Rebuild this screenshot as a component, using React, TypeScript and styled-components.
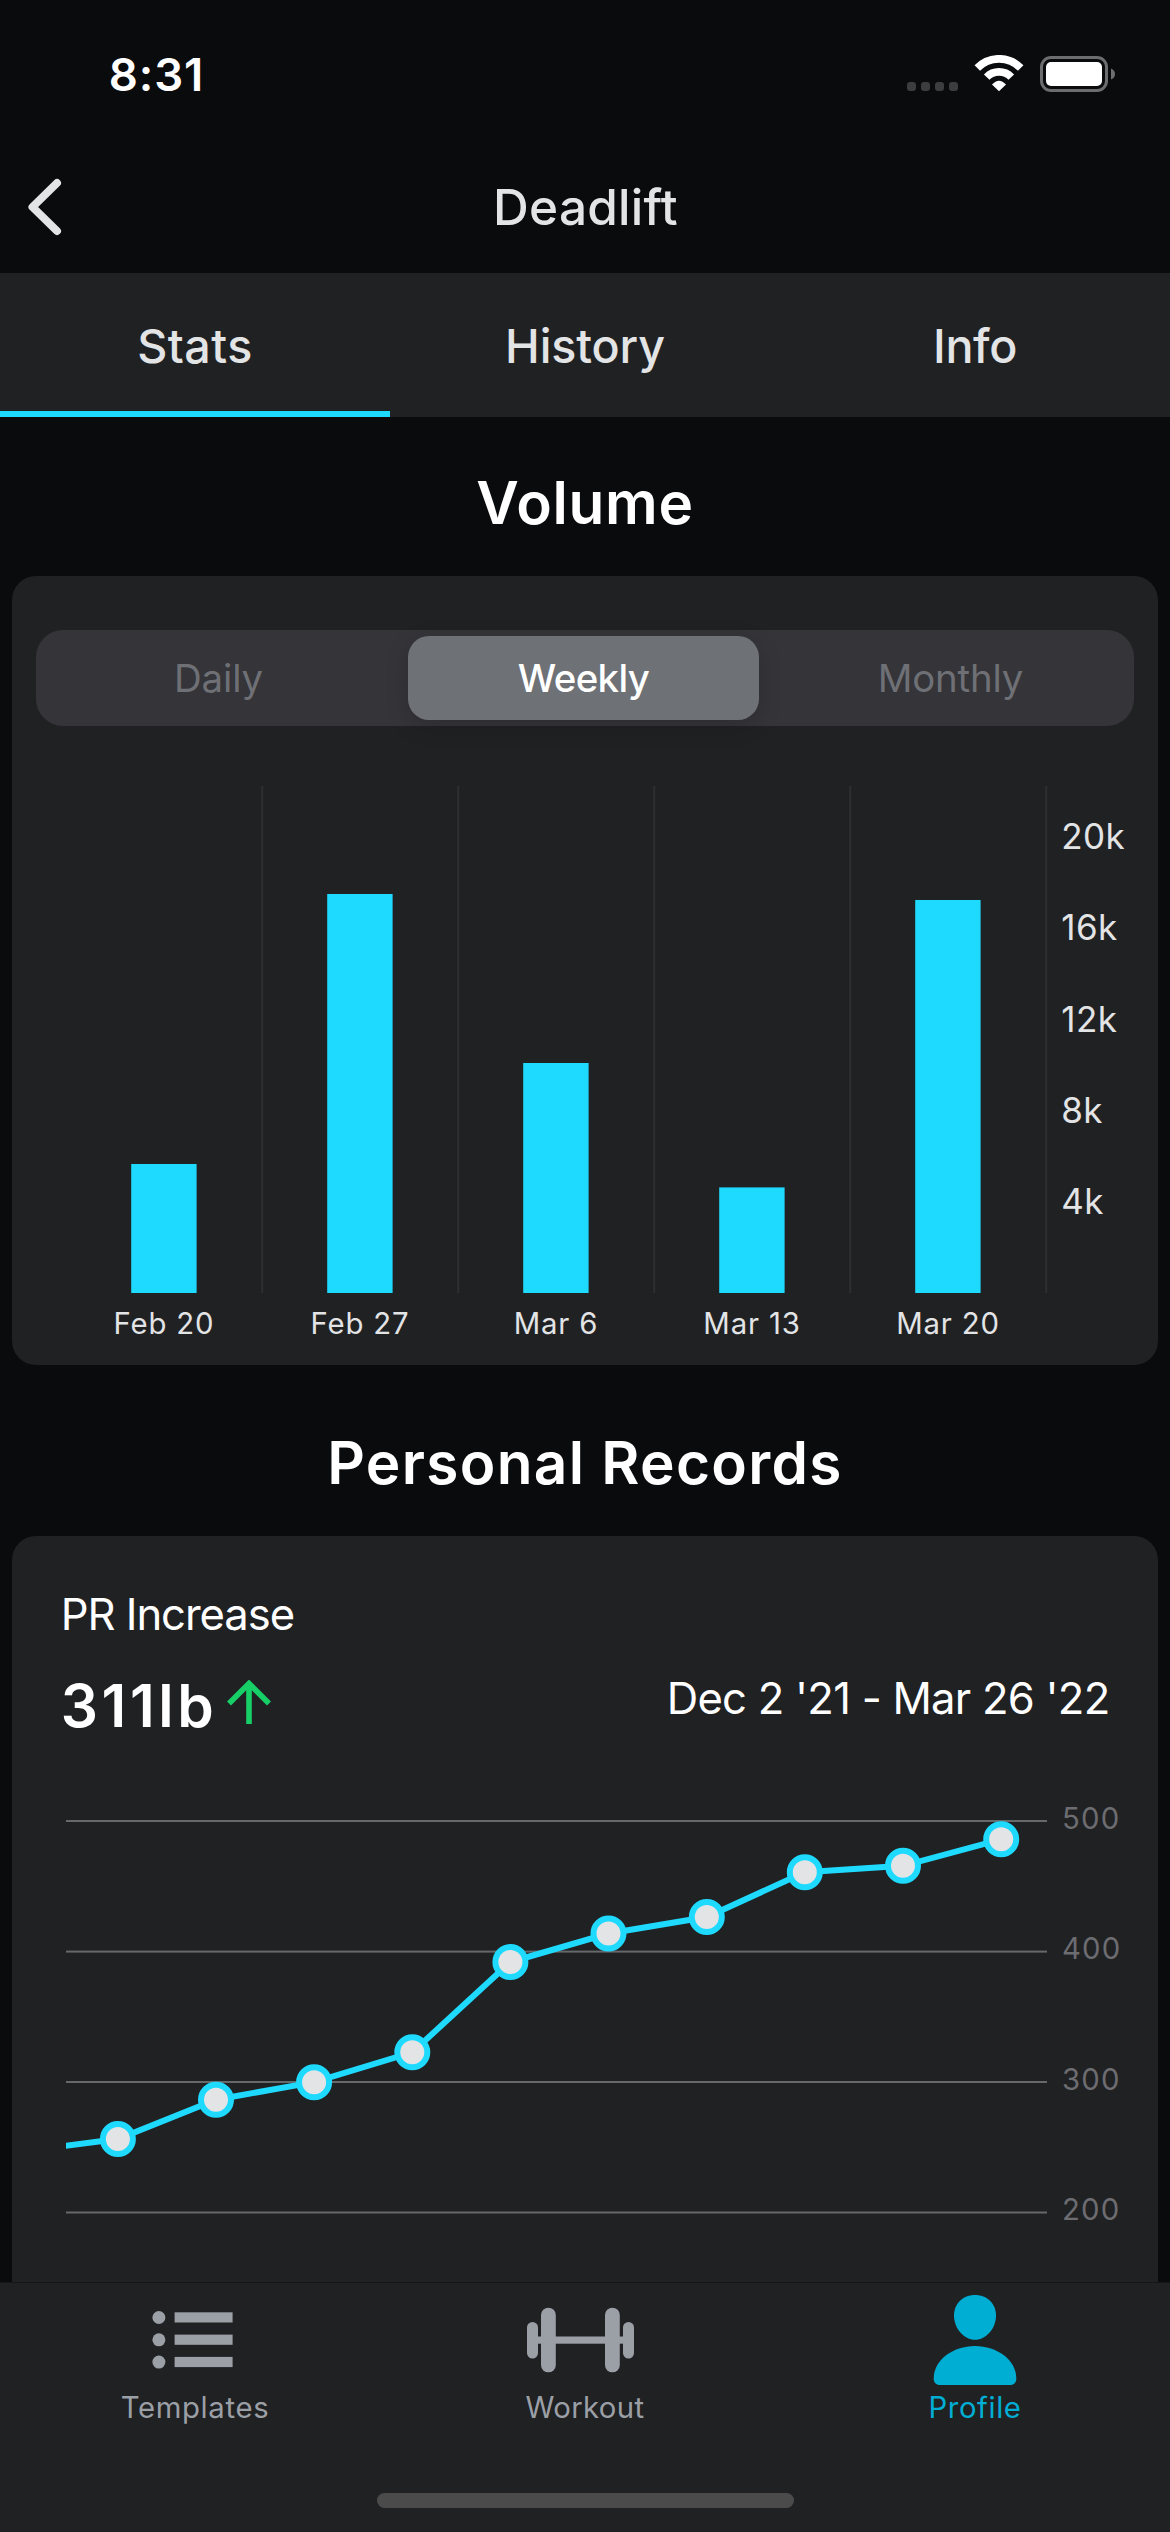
import React from "react";
import styled, { createGlobalStyle } from "styled-components";

const color = {
  bg: "#0a0b0d",
  surface: "#202123",
  text: "#e3e4e6",
  white: "#ffffff",
  accent: "#1edaff",
  accentDim: "#00aed4",
  muted: "#6e7075",
  icon: "#9b9fa6",
};

const GlobalStyle = createGlobalStyle`
  * { box-sizing: border-box; }
  body {
    margin: 0;
    background: ${color.bg};
    font-family: Inter, "Liberation Sans", sans-serif;
  }
  svg { display: block; flex: none; }
`;

const Screen = styled.div`
  display: flex;
  flex-direction: column;
  width: 1170px;
  height: 2532px;
  overflow: hidden;
  background: ${color.bg};
  color: ${color.text};
`;

/* Status bar */

const StatusBar = styled.header`
  display: flex;
  align-items: center;
  justify-content: space-between;
  height: 147px;
  padding: 0 55px 0 108.8px;
`;

const Clock = styled.time`
  padding-top: 2px;
  font-size: 45.5px;
  font-weight: 600;
  letter-spacing: 0.9px;
  line-height: 54px;
  color: ${color.white};
`;

const StatusIcons = styled.div`
  display: flex;
  gap: 16px;
`;

/* Navigation */

const NavBar = styled.nav`
  display: grid;
  grid-template-columns: 1fr auto 1fr;
  align-items: center;
  height: 126px;
  padding: 0 28px 6px;
`;

const BackButton = styled.button`
  justify-self: start;
  padding: 0;
  border: 0;
  background: none;
  color: ${color.text};
`;

const NavTitle = styled.h1`
  margin: 0;
  font-size: 49.5px;
  font-weight: 550;
  letter-spacing: 0.25px;
  line-height: 60px;
  padding-left: 1px;
`;

const Tabs = styled.div`
  display: grid;
  grid-template-columns: repeat(3, 1fr);
  height: 144px;
  background: ${color.surface};
`;

const Tab = styled.button<{ $active?: boolean; $tracking: number }>`
  padding: 8px 0 0;
  border: 0;
  border-bottom: 6px solid ${(p) => (p.$active ? color.accent : "transparent")};
  background: none;
  color: ${color.text};
  font: 500 46.6px Inter, "Liberation Sans", sans-serif;
  letter-spacing: ${(p) => p.$tracking}px;
`;

/* Sections */

const Content = styled.main`
  flex: 1;
  min-height: 0;
  overflow: hidden;
`;

const SectionTitle = styled.h2<{ $tracking: number }>`
  display: flex;
  align-items: center;
  justify-content: center;
  height: 159px;
  margin: 0;
  padding-top: 12px;
  font-size: 58.5px;
  font-weight: 600;
  letter-spacing: ${(p) => p.$tracking}px;
  color: ${color.white};
`;

const Card = styled.section`
  margin: 0 12px 12px;
  border-radius: 24px;
  background: ${color.surface};
`;

const VolumeCard = styled(Card)`
  height: 789px;
  padding: 54px 24px 0;
`;

const Segmented = styled.div`
  display: grid;
  grid-template-columns: repeat(3, 1fr);
  height: 96px;
  border-radius: 27px;
  background: #343439;
`;

const Segment = styled.button<{ $selected?: boolean; $tracking: number }>`
  margin: 6px 9px 6px 6px;
  padding: 0 0 0 ${(p) => (p.$selected ? 0 : 2)}px;
  border: 0;
  border-radius: 21px;
  background: ${(p) => (p.$selected ? "#6e7175" : "transparent")};
  box-shadow: ${(p) => (p.$selected ? "0 6px 24px rgba(0, 0, 0, 0.14)" : "none")};
  color: ${(p) => (p.$selected ? color.white : color.muted)};
  font: ${(p) => (p.$selected ? 500 : 400)} 38.4px Inter, "Liberation Sans", sans-serif;
  letter-spacing: ${(p) => p.$tracking}px;
`;

const BarChart = styled.div`
  display: flex;
  margin: 60px 0 0 30px;
`;

const VolumeAxis = styled.ol`
  margin: 0;
  padding: 5.2px 0 0 13.3px;
  list-style: none;
  font-size: 35px;
  letter-spacing: 0.4px;
  line-height: 91.25px;
  white-space: nowrap;
`;

const DateAxis = styled.div`
  display: grid;
  grid-template-columns: repeat(5, 196px);
  margin-left: 30px;
  text-align: center;
  font-size: 29.3px;
  letter-spacing: 0.85px;
  line-height: 61px;
`;

/* Personal records */

const RecordsCard = styled(Card)`
  height: 900px;
  padding: 49px 48.5px 0 48.8px;
  color: ${color.white};
`;

const RecordsLabel = styled.div`
  font-size: 43.6px;
  letter-spacing: -1.07px;
  line-height: 60px;
`;

const RecordsSummary = styled.div`
  display: flex;
  align-items: flex-start;
  height: 75px;
  margin-top: 23px;
`;

const Increase = styled.strong`
  margin-right: 10px;
  font-size: 58.5px;
  font-weight: 600;
  letter-spacing: 3.6px;
  line-height: 75px;
`;

const ArrowSlot = styled.span`
  padding-top: 12px;
`;

const DateRange = styled.span`
  margin-left: auto;
  padding-top: 1px;
  font-size: 43.6px;
  letter-spacing: -0.76px;
  line-height: 60px;
`;

const LineChart = styled.div`
  display: flex;
  margin: 10px 0 0 5.2px;
`;

const WeightAxis = styled.ol`
  flex: none;
  margin: 0;
  padding: 1px 0 0 15px;
  list-style: none;
  color: #6c6c71;
  font-size: 29.3px;
  letter-spacing: 1.2px;
  line-height: 130.4px;
`;

/* Bottom navigation */

const BottomBar = styled.footer`
  display: flex;
  flex-direction: column;
  align-items: center;
  height: 250px;
  border-top: 1px solid #151618;
  background: ${color.surface};
`;

const BottomItems = styled.div`
  display: grid;
  grid-template-columns: repeat(3, 390px);
  padding-top: 9px;
`;

const BottomItem = styled.a<{ $active?: boolean; $tracking: number }>`
  display: flex;
  flex-direction: column;
  align-items: center;
  gap: 1px;
  color: ${(p) => (p.$active ? color.accentDim : color.icon)};
  font-size: 29.3px;
  letter-spacing: ${(p) => p.$tracking}px;
  line-height: 38px;
`;

const HomeIndicator = styled.div`
  width: 417px;
  height: 15px;
  margin: auto 0 24px;
  border-radius: 8px;
  background: #4b4b4b;
`;

/* Icons */

const SignalDots = () => (
  <svg width="51" height="37" fill="#3c3d3e">
    {[0, 14, 28, 42].map((x) => (
      <rect key={x} x={x} y="27" width="9" height="9" rx="3" />
    ))}
  </svg>
);

const WifiIcon = () => (
  <svg width="50" height="37" fill="none" stroke="#fff" strokeWidth="7.7">
    <path d="M3.3 13A30.2 30.2 0 0 1 46.7 13" />
    <path d="M12.7 22.1A17.1 17.1 0 0 1 37.3 22.1" />
    <path d="M18 29.6Q25 21.8 32 29.6L25 36.3Z" fill="#fff" stroke="none" />
  </svg>
);

const BatteryIcon = () => (
  <svg width="75" height="37">
    <rect x="1.5" y="2.5" width="65" height="33" rx="9.5" fill="none" stroke="#6c6d6e" strokeWidth="3" />
    <rect x="6" y="7" width="56" height="24" rx="5" fill="#fff" />
    <path d="M71 13.5Q75 15 75 19T71 24.5Z" fill="#6c6d6e" />
  </svg>
);

const BackIcon = () => (
  <svg width="34" height="58" fill="none" stroke="currentColor" strokeWidth="8" strokeLinecap="round" strokeLinejoin="round">
    <path d="M29 5L4.5 29L29 53" />
  </svg>
);

const ArrowUpIcon = () => (
  <svg width="44" height="44" fill="none" stroke="#17cf67" strokeWidth="5.6">
    <path d="M22 44V4M2 23.5L22 3.5L42 23.5" />
  </svg>
);

const ListIcon = () => (
  <svg width="120" height="96" fill="currentColor">
    {[25.5, 47.8, 70.1].map((y) => (
      <g key={y}>
        <circle cx="23.9" cy={y} r="6.5" />
        <rect x="39.6" y={y - 5.2} width="58" height="10.2" />
      </g>
    ))}
  </svg>
);

const BarbellIcon = () => (
  <svg width="120" height="96" fill="currentColor">
    <rect x="2" y="30" width="11" height="36.5" rx="5.5" />
    <rect x="16" y="15.7" width="14.8" height="64.6" rx="7.4" />
    <rect x="80" y="15.7" width="14.8" height="64.6" rx="7.4" />
    <rect x="98" y="30" width="11" height="36.5" rx="5.5" />
    <rect x="8" y="44.5" width="95" height="7.2" />
  </svg>
);

const PersonIcon = () => (
  <svg width="120" height="96" fill="currentColor">
    <path d="M60 3C72 3 81 11.5 81 23.5C81 36.5 71 47.8 60 47.8S39 36.5 39 23.5C39 11.5 48 3 60 3Z" />
    <path d="M60 54C82 54 101.3 68 101.3 86.500C101.3 90.5 99 93 95 93H25C21 93 18.7 90.5 18.7 86.5C18.7 68 38 54 60 54Z" />
  </svg>
);

/* Data */

const volume = [
  { date: "Feb 20", height: 129 },
  { date: "Feb 27", height: 399 },
  { date: "Mar 6", height: 230 },
  { date: "Mar 13", height: 105.6 },
  { date: "Mar 20", height: 393 },
];

const records: [number, number][] = [
  [51.9, 386],
  [150, 346.7],
  [248.1, 329.2],
  [346.3, 299.3],
  [444.4, 209],
  [542.5, 180.5],
  [640.8, 164],
  [738.8, 119.3],
  [837, 112.8],
  [935.2, 86.3],
];

export default function App() {
  const line = [[-46.2, 398.7], ...records].map((p) => p.join(",")).join(" ");
  return (
    <Screen>
      <GlobalStyle />
      <StatusBar>
        <Clock>8:31</Clock>
        <StatusIcons>
          <SignalDots />
          <WifiIcon />
          <BatteryIcon />
        </StatusIcons>
      </StatusBar>
      <NavBar>
        <BackButton aria-label="Back">
          <BackIcon />
        </BackButton>
        <NavTitle>Deadlift</NavTitle>
      </NavBar>
      <Tabs>
        <Tab $active $tracking={0.5}>Stats</Tab>
        <Tab $tracking={-0.1}>History</Tab>
        <Tab $tracking={-0.35}>Info</Tab>
      </Tabs>
      <Content>
        <SectionTitle $tracking={0.7}>Volume</SectionTitle>
        <VolumeCard>
          <Segmented>
            <Segment $tracking={-0.14}>Daily</Segment>
            <Segment $selected $tracking={-0.61}>Weekly</Segment>
            <Segment $tracking={-0.17}>Monthly</Segment>
          </Segmented>
          <BarChart>
            <svg width="982" height="507">
              {volume.map((v, i) => (
                <g key={v.date}>
                  <rect x={195.2 + 196 * i} y="0" width="2" height="507" fill="#2e2f31" />
                  <rect x={65.2 + 196 * i} y={507 - v.height} width="65.4" height={v.height} fill={color.accent} />
                </g>
              ))}
            </svg>
            <VolumeAxis>
              {["20k", "16k", "12k", "8k", "4k"].map((t) => (
                <li key={t}>{t}</li>
              ))}
            </VolumeAxis>
          </BarChart>
          <DateAxis>
            {volume.map((v) => (
              <span key={v.date}>{v.date}</span>
            ))}
          </DateAxis>
        </VolumeCard>
        <SectionTitle $tracking={1.31}>Personal Records</SectionTitle>
        <RecordsCard>
          <RecordsLabel>PR Increase</RecordsLabel>
          <RecordsSummary>
            <Increase>311lb</Increase>
            <ArrowSlot>
              <ArrowUpIcon />
            </ArrowSlot>
            <DateRange>Dec 2 '21 - Mar 26 '22</DateRange>
          </RecordsSummary>
          <LineChart>
            <svg width="981" height="529">
              {[68, 198.6, 329, 459.5].map((y) => (
                <rect key={y} x="0" y={y - 1} width="981" height="2" fill="#66696b" />
              ))}
              <polyline points={line} fill="none" stroke={color.accent} strokeWidth="6" />
              {records.map(([x, y]) => (
                <circle key={x} cx={x} cy={y} r="15" fill={color.text} stroke={color.accent} strokeWidth="6" />
              ))}
            </svg>
            <WeightAxis>
              {[500, 400, 300, 200].map((n) => (
                <li key={n}>{n}</li>
              ))}
            </WeightAxis>
          </LineChart>
        </RecordsCard>
      </Content>
      <BottomBar>
        <BottomItems>
          <BottomItem $tracking={0.67}>
            <ListIcon />
            Templates
          </BottomItem>
          <BottomItem $tracking={0.36}>
            <BarbellIcon />
            Workout
          </BottomItem>
          <BottomItem $active $tracking={0.59}>
            <PersonIcon />
            Profile
          </BottomItem>
        </BottomItems>
        <HomeIndicator />
      </BottomBar>
    </Screen>
  );
}
